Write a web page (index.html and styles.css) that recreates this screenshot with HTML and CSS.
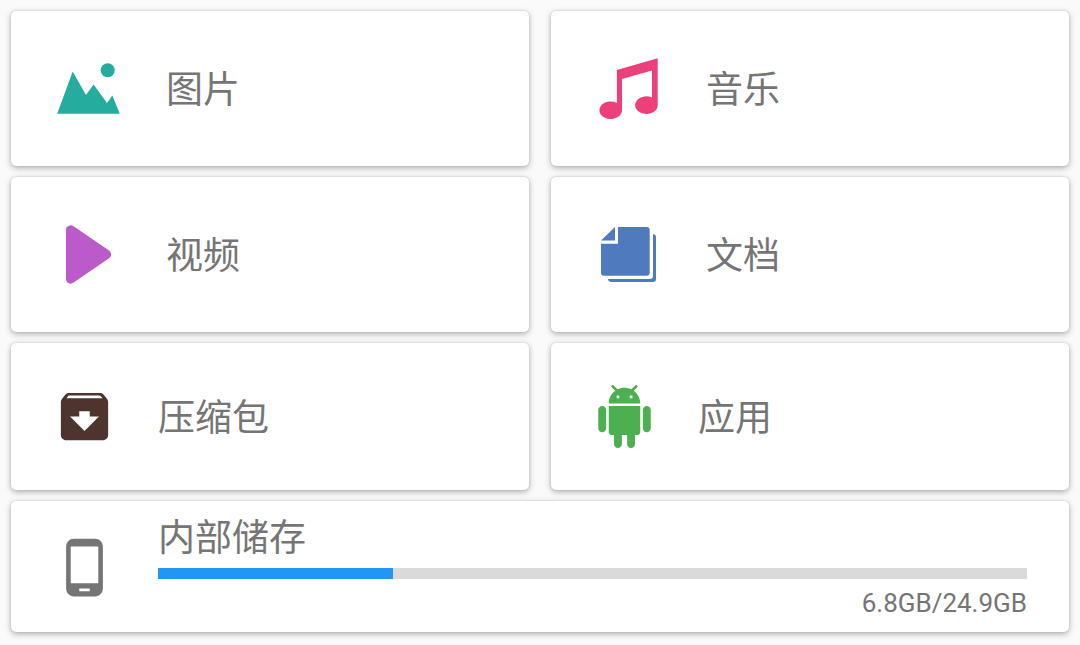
FILE: index.html
```html
<!DOCTYPE html>
<html lang="zh-CN">
<head>
<meta charset="utf-8">
<meta name="viewport" content="width=device-width, initial-scale=1">
<title>文件管理</title>
<link rel="stylesheet" href="styles.css">
</head>
<body>
<main class="grid">
  <a class="card" href="#images">
    <svg class="icon icon-large images" viewBox="0 0 71 71" aria-hidden="true">
      <path d="M4.2 60.8L19.7 18.5 33 42l7.6-10.400L54 50l5.300-7.400 7.500 18.200z"/>
      <circle cx="54.7" cy="17.2" r="7"/>
    </svg>
    <span class="label">图片</span>
  </a>
  <a class="card" href="#music">
    <svg class="icon icon-large music" viewBox="0 0 71 71" aria-hidden="true">
      <path d="M23.9 17L64.7 5.2V52.2a11.3 8.8 0 1 1-5.7-7.7V17.6L29 26v31.3a11.3 8.8 0 1 1-5.1-7.4z"/>
    </svg>
    <span class="label">音乐</span>
  </a>
  <a class="card" href="#videos">
    <svg class="icon icon-large videos" viewBox="0 0 71 71" aria-hidden="true">
      <path d="M17.6 11v49L53.4 35.4z" stroke="currentColor" stroke-width="9.4" stroke-linejoin="round"/>
    </svg>
    <span class="label">视频</span>
  </a>
  <a class="card" href="#documents">
    <svg class="icon icon-large documents" viewBox="0 0 71 71" aria-hidden="true">
      <path d="M8 21.5L22 8v13.5z"/>
      <path d="M25 8h28.7a3 3 0 0 1 3 3v42.7a3 3 0 0 1-3 3H11a3 3 0 0 1-3-3V24.700h17z"/>
      <path d="M60 15.2a3 3 0 0 1 3 3V60a3 3 0 0 1-3 3H18.3a3.3 3.3 0 0 1-3.300-3h42a3 3 0 0 0 3-3z"/>
    </svg>
    <span class="label">文档</span>
  </a>
  <a class="card" href="#archives">
    <svg class="icon archives" viewBox="0 0 24 24" aria-hidden="true">
      <path d="M20.54 5.23l-1.39-1.68C18.88 3.21 18.47 3 18 3H6c-.47 0-.88.21-1.16.55L3.46 5.23C3.17 5.57 3 6.02 3 6.5V19c0 1.1.9 2 2 2h14c1.1 0 2-.9 2-2V6.5c0-.48-.17-.93-.46-1.27zM12 17.5L6.5 12H10v-2h4v2h3.5L12 17.5zM5.12 5l.81-1h12l.94 1H5.12z"/>
    </svg>
    <span class="label">压缩包</span>
  </a>
  <a class="card" href="#apps">
    <svg class="icon apps" viewBox="0 0 24 24" aria-hidden="true">
      <path d="M6 18c0 .55.45 1 1 1h1v3.5c0 .83.67 1.5 1.5 1.5s1.5-.67 1.5-1.5V19h2v3.5c0 .83.67 1.5 1.5 1.5s1.5-.67 1.5-1.5V19h1c.55 0 1-.45 1-1V8H6v10zM3.5 8C2.67 8 2 8.67 2 9.5v7c0 .83.67 1.5 1.5 1.5S5 17.33 5 16.5v-7C5 8.67 4.33 8 3.5 8zm17 0c-.83 0-1.5.67-1.5 1.5v7c0 .83.67 1.5 1.5 1.5s1.5-.67 1.5-1.5v-7c0-.83-.67-1.5-1.5-1.5zm-4.97-5.84l1.3-1.3c.2-.2.2-.51 0-.71-.2-.2-.51-.2-.71 0l-1.48 1.48C13.85 1.23 12.95 1 12 1c-.96 0-1.86.23-2.66.63L7.85.15c-.2-.2-.51-.2-.71 0-.2.2-.2.51 0 .71l1.31 1.31C6.97 3.26 6 5.01 6 7h12c0-1.99-.97-3.75-2.47-4.84zM10 5H9V4h1v1zm5 0h-1V4h1v1z"/>
    </svg>
    <span class="label">应用</span>
  </a>
  <section class="card storage">
    <svg class="icon phone" viewBox="0 0 24 24" aria-hidden="true">
      <path d="M16 1H8C6.34 1 5 2.34 5 4v16c0 1.66 1.34 3 3 3h8c1.66 0 3-1.34 3-3V4c0-1.66-1.34-3-3-3zm-2 20h-4v-1h4v1zm3.25-3H6.75V4h10.5v14z"/>
    </svg>
    <div class="usage">
      <label class="label" for="usage-bar">内部储存</label>
      <progress class="bar" id="usage-bar" max="100" value="27"></progress>
      <span class="amount">6.8GB/24.9GB</span>
    </div>
  </section>
</main>
</body>
</html>
```
FILE: styles.css
```css
* {
  box-sizing: border-box;
}

body {
  margin: 0;
  background: #fafafa;
  color: #757575;
  font-family: Roboto, "Noto Sans CJK SC", sans-serif;
}

.grid {
  display: grid;
  grid-template-columns: 1fr 1fr;
  gap: 11px 22px;
  padding: 11px;
}

.card {
  display: flex;
  align-items: center;
  gap: 42px;
  padding: 42px;
  border-radius: 5px;
  background: #fff;
  box-shadow: 0 2px 6px rgba(0, 0, 0, 0.3), 0 0 2px rgba(0, 0, 0, 0.16);
  color: inherit;
  text-decoration: none;
}

.icon {
  flex: none;
  width: 63px;
  height: 63px;
  fill: currentColor;
}

.icon-large {
  width: 71px;
  height: 71px;
}

.images { color: #26ac9f; }
.music { color: #ec407a; }
.videos { color: #ba5bc9; }
.documents { color: #4f7bbe; }
.archives { color: #4e342e; }
.apps { color: #4caf50; }

.label {
  padding-top: 4px;
  font-size: 37px;
  line-height: 40px;
}

.storage {
  grid-column: 1 / -1;
  padding: 14px 42px 13px;
}

.usage {
  display: flex;
  flex: 1;
  flex-direction: column;
  gap: 9px;
}

.bar {
  display: block;
  width: 100%;
  height: 11px;
  border: 0;
  background: #dadada;
  appearance: none;
}

.bar::-webkit-progress-bar {
  background: #dadada;
}

.bar::-webkit-progress-value {
  background: #2196f3;
}

.bar::-moz-progress-bar {
  background: #2196f3;
}

.amount {
  align-self: flex-end;
  font-size: 26px;
  line-height: 31px;
}
```
